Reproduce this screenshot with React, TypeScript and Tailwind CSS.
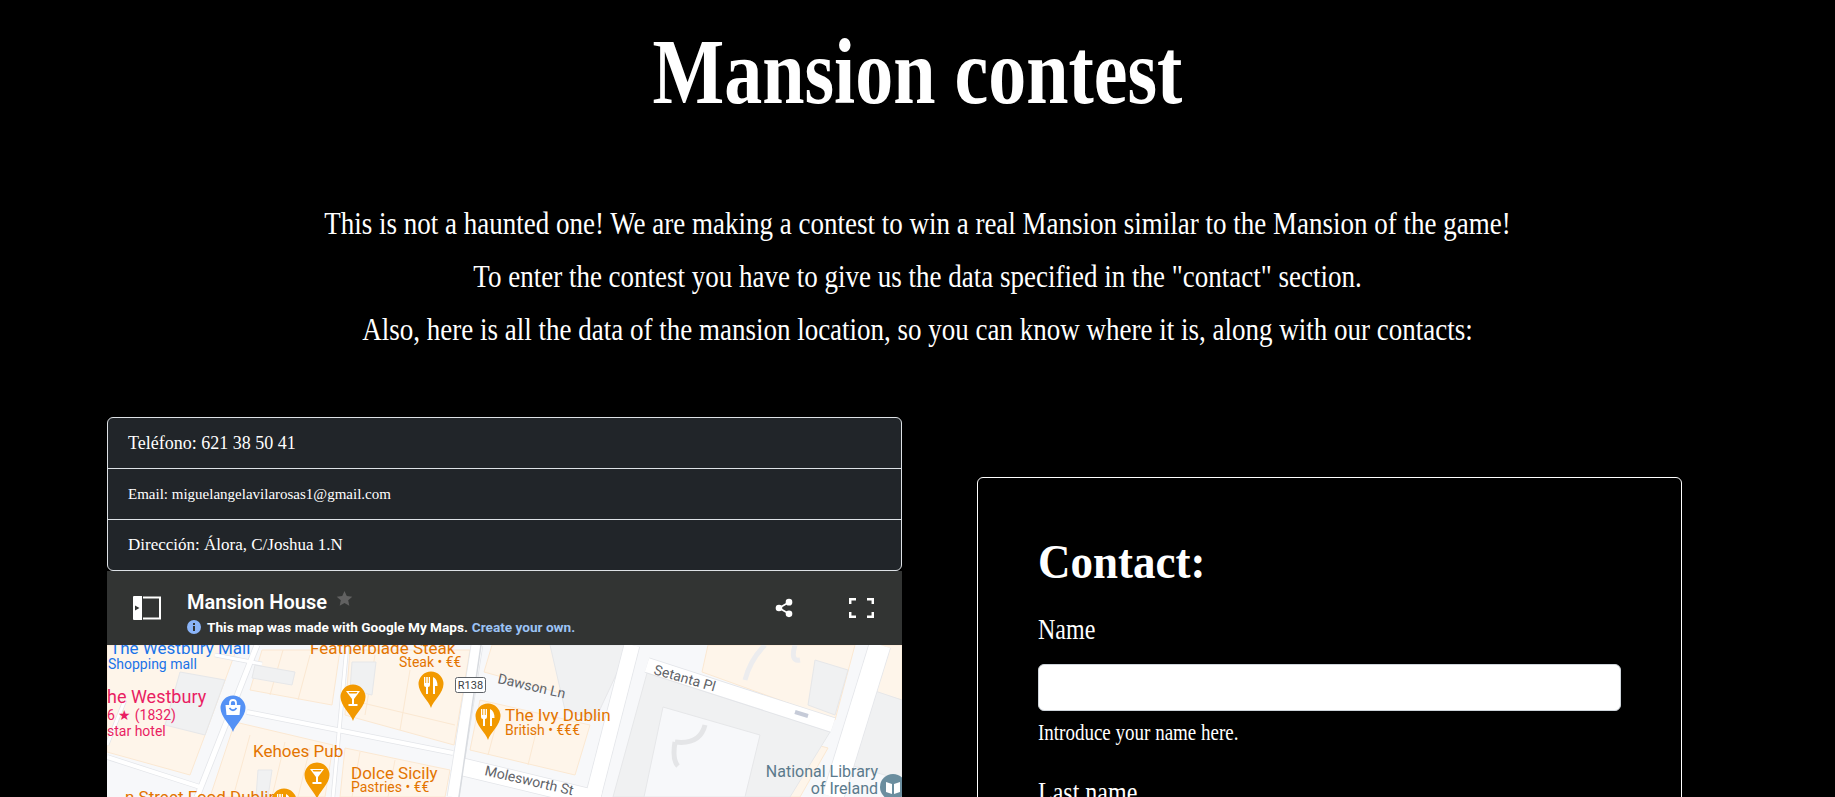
import { Share2 } from 'lucide-react';

const serif = 'font-["Liberation_Serif",serif]';

function MapPin({ x, y, color, kind }: { x: number; y: number; color: string; kind: 'fork' | 'glass' | 'bag' }) {
    return (
        <g transform={`translate(${x} ${y})`}>
            <path d="M0 24C-2 17-12.500 9-12.500 0A12.500 12.500 0 1 1 12.500 0C12.500 9 2 17 0 24Z" fill={color} />
            {kind === 'fork' && (
                <path d="M-7-7V1Q-7 3-5 3V10H-3V3Q-1 3-1 1V-7H-2.300V-1H-3.200V-7H-4.800V-1H-5.700V-7ZM2-7Q6.500-5 6.500 2H4V10H2Z" fill="#fff" />
            )}
            {kind === 'glass' && (
                <path d="M-7-6H7L1 2V7H4.500V9H-4.500V7H-1V2ZM-3.500-3.500H3.500L4.500-5H-4.500Z" fill="#fff" fillRule="evenodd" />
            )}
            {kind === 'bag' && (
                <g fill="none" stroke="#fff" strokeWidth="1.800">
                    <path d="M-7.500-3H7.500L6.500 7H-6.500Z" fill="#fff" stroke="none" />
                    <path d="M-3-3V-5Q-3-8 0-8T3-5V-3" />
                    <path d="M-3.500 0Q0 4.500 3.500 0" stroke={color} />
                </g>
            )}
        </g>
    );
}

const roads: [string, number][] = [
    ['M197 797L257 645', 5],
    ['M333 797L347 645', 3],
    ['M247 712L453 753', 4],
    ['M107 757L200 787', 4],
    ['M107 745L125 700', 3],
    ['M215 655L262 664', 3],
    ['M453 797L477 645', 11],
    ['M463 767L600 800', 17],
    ['M632 645L593 797', 15],
    ['M647 665L833 725', 14],
    ['M880 645L833 797', 21],
];

function MapCanvas() {
    const peach = '#fef5ea';
    const grey = '#f0f1f2';
    const edge = '#fbe8d2';
    return (
        <svg viewBox="107 645 795 152" className="block h-[152px] w-full" style={{ fontFamily: 'Roboto, sans-serif' }}>
            <rect x="107" y="645" width="795" height="152" fill="#f7f8fa" />
            {/* blocks */}
            <g fill={peach} stroke={edge} strokeWidth="1">
                <path d="M107 645H238L205 735L190 775L107 752Z" />
                <path d="M262 650L340 650L332 705L250 690Z" />
                <path d="M350 650H470L454 745L345 715Z" />
                <path d="M235 722L333 745L325 797H210Z" />
                <path d="M345 748L450 770L445 797H340Z" />
                <path d="M480 700L590 725L575 775L470 750Z" />
                <path d="M492 645H575L560 693L484 672Z" />
                <path d="M708 645H855L835 720L702 672Z" />
                <path d="M780 735L828 748L800 797H760Z" />
                <path d="M880 645H902V700L865 690Z" />
                <path d="M696 750L730 752L716 797H680Z" />
            </g>
            <g fill="none" stroke={edge} strokeWidth="1">
                <path d="M283 650L270 695M310 655L298 700M250 735L235 790M285 742L272 797M310 748L298 797" />
                <path d="M375 655L365 715M410 670L400 730M350 700L455 725" />
                <path d="M360 752L352 797M395 760L388 797M500 710L488 755M540 716L528 765" />
            </g>
            {/* grey buildings */}
            <g fill={grey} stroke="#e6e7e9" strokeWidth="1">
                <path d="M180 672L225 680L205 735L165 725Z" />
                <path d="M255 665L295 672L292 685L252 678Z" />
                <path d="M352 662H376L372 695L350 690Z" />
                <path d="M550 645H630L595 720L565 710Z" />
                <path d="M647 673L830 732L790 797H613Z" />
                <path d="M815 660L848 670L835 715L808 705Z" />
                <path d="M872 690L902 700V780L850 765Z" />
                <path d="M258 770H272L268 797H256Z" />
            </g>
            <path d="M663 707L760 735L745 797H644Z" fill="#f7f8fa" stroke="#e6e7e9" />
            <path d="M675 742Q700 745 705 725M675 742Q672 760 678 766" fill="none" stroke="#e4e5e7" strokeWidth="5" />
            <path d="M765 645Q750 660 745 680M795 645Q790 662 800 660" fill="none" stroke="#ececee" strokeWidth="5" />
            {/* roads */}
            <g fill="none">
                {roads.map(([d, width]) => (
                    <path key={d} d={d} stroke="#e3e5e9" strokeWidth={width + 1.5} />
                ))}
                {roads.map(([d, width]) => (
                    <path key={`${d}-fill`} d={d} stroke="#fff" strokeWidth={width} />
                ))}
            </g>
            <path d="M459 797L481 645" stroke="#d8dbe0" strokeWidth="1.500" fill="none" />
            <path d="M795 712L808 716" stroke="#c6cbd8" strokeWidth="4" />
            {/* labels */}
            <g fill="#1a73e8" fontSize="17">
                <text x="110" y="654">The Westbury Mall</text>
                <text x="108" y="669" fontSize="14">Shopping mall</text>
            </g>
            <g fill="#e91e63">
                <text x="107" y="703" fontSize="18">he Westbury</text>
                <text x="107" y="720" fontSize="14">6 ★ (1832)</text>
                <text x="107" y="736" fontSize="14">star hotel</text>
            </g>
            <g fill="#e37400" fontSize="17">
                <text x="310" y="654">Featherblade Steak</text>
                <text x="399" y="667" fontSize="14">Steak • €€</text>
                <text x="253" y="757">Kehoes Pub</text>
                <text x="351" y="779">Dolce Sicily</text>
                <text x="351" y="792" fontSize="14">Pastries • €€</text>
                <text x="125" y="803">n Street Food Dublin</text>
                <text x="505" y="721">The Ivy Dublin</text>
                <text x="505" y="735" fontSize="14">British • €€€</text>
            </g>
            <g fill="#5f6368" fontSize="14">
                <text transform="translate(497 683) rotate(13)">Dawson Ln</text>
                <text transform="translate(653 674) rotate(16)">Setanta Pl</text>
                <text transform="translate(484 775) rotate(13)">Molesworth St</text>
            </g>
            <g fill="#5b7a8c" fontSize="16" textAnchor="end">
                <text x="878" y="777">National Library</text>
                <text x="878" y="794">of Ireland</text>
            </g>
            <rect x="455.500" y="677.500" width="30" height="15" rx="2" fill="#fff" stroke="#5f6368" />
            <text x="470.500" y="689" fontSize="11" textAnchor="middle" fill="#3c4043">R138</text>
            <MapPin x={353} y={697} color="#f29900" kind="glass" />
            <MapPin x={431} y={684} color="#f29900" kind="fork" />
            <MapPin x={488} y={716} color="#f29900" kind="fork" />
            <MapPin x={233} y={708} color="#5491f5" kind="bag" />
            <MapPin x={317} y={775} color="#f29900" kind="glass" />
            <MapPin x={284} y={801} color="#f29900" kind="fork" />
            <circle cx="893" cy="787" r="13" fill="#6b8e9f" />
            <path d="M886 782L892 784V794L886 792ZM894 784L900 782V792L894 794Z" fill="#fff" />
        </svg>
    );
}

function MapHeader() {
    return (
        <div className="flex h-[74px] items-center bg-[#323433] font-['Roboto',sans-serif] text-white">
            <svg viewBox="0 0 28 24" className="ml-[26px] h-[24px] w-[28px]">
                <path d="M10 1.500H27V22.500H10" fill="none" stroke="#fff" strokeWidth="2" />
                <path d="M1 0H9V24H1A1 1 0 0 1 0 23V1A1 1 0 0 1 1 0Z" fill="#fff" />
                <path d="M2 9.500V14.500L6.500 12Z" fill="#323433" />
            </svg>
            <div className="mt-[8px] ml-[26px] flex flex-col">
                <div className="flex items-start">
                    <span className="text-[20px] leading-[26px] font-semibold">Mansion House</span>
                    <svg viewBox="0 0 24 24" className="mt-[1px] ml-[9px] h-[17px] w-[17px]" fill="#616161">
                        <path d="M12 1.500L15.200 8.600L23 9.400L17.200 14.600L18.800 22.300L12 18.400L5.200 22.300L6.800 14.600L1 9.400L8.800 8.600Z" />
                    </svg>
                </div>
                <div className="mt-[3px] flex items-center text-[13.600px] leading-[18px] font-bold">
                    <svg viewBox="0 0 14 14" className="mr-[6px] h-[14px] w-[14px]">
                        <circle cx="7" cy="7" r="7" fill="#8ab4f8" />
                        <rect x="6" y="6" width="2" height="5" fill="#323433" />
                        <rect x="6" y="3" width="2" height="2" fill="#323433" />
                    </svg>
                    <span>This map was made with Google My Maps.</span>
                    <span className="ml-[4px] text-[#9cc3f5]">Create your own.</span>
                </div>
            </div>
            <Share2 className="ml-auto h-[20px] w-[20px]" fill="#fff" strokeWidth={2} />
            <svg viewBox="0 0 25 20" className="mr-[28px] ml-[55px] h-[20px] w-[25px]" fill="none" stroke="#fff" strokeWidth="2.500">
                <path d="M1.200 6V1.200H7M18 1.200H23.800V6M23.800 14V18.800H18M7 18.800H1.200V14" />
            </svg>
        </div>
    );
}

function ContactList() {
    const rowClass = 'flex items-center px-[20px] text-white';
    return (
        <ul className={`rounded-[6px] border border-[#dee2e6] bg-[#212529] ${serif}`}>
            <li className={`${rowClass} h-[51px] border-b border-[#dee2e6] text-[18px]`}>Teléfono: 621 38 50 41</li>
            <li className={`${rowClass} h-[51px] border-b border-[#dee2e6] text-[15px]`}>Email: miguelangelavilarosas1@gmail.com</li>
            <li className={`${rowClass} h-[50px] text-[17px]`}>Dirección: Álora, C/Joshua 1.N</li>
        </ul>
    );
}

function ContactForm() {
    return (
        <form className={`mt-[60px] h-[400px] w-[705px] rounded-[6px] border border-white px-[60px] pt-[58px] text-white ${serif}`}>
            <h2 className="origin-left scale-y-[1.1] text-[45px] leading-[53px] font-bold">Contact:</h2>
            <label className="mt-[22px] block origin-left scale-y-[1.2] text-[24px] leading-[36px]">Name</label>
            <input className="mt-[17px] block h-[47px] w-full rounded-[6px] border border-[#ced4da] bg-white" />
            <p className="mt-[8px] origin-left scale-y-[1.2] text-[19px] leading-[28px]">Introduce your name here.</p>
            <label className="mt-[27px] block origin-left scale-y-[1.2] text-[24px] leading-[36px]">Last name</label>
        </form>
    );
}

export default function App() {
    return (
        <div className="h-screen overflow-hidden bg-black text-white">
            <h1 className={`scale-y-[1.22] pt-[24px] text-center text-[76px] leading-[90px] font-bold ${serif}`}>Mansion contest</h1>
            <div className={`mt-[83px] text-center text-[27px] leading-[53px] ${serif}`}>
                <p className="scale-y-[1.2]">This is not a haunted one! We are making a contest to win a real Mansion similar to the Mansion of the game!</p>
                <p className="scale-y-[1.2]">To enter the contest you have to give us the data specified in the "contact" section.</p>
                <p className="scale-y-[1.2]">Also, here is all the data of the mansion location, so you can know where it is, along with our contacts:</p>
            </div>
            <div className="mt-[61px] flex items-start gap-[75px] pl-[107px]">
                <div className="w-[795px]">
                    <ContactList />
                    <MapHeader />
                    <MapCanvas />
                </div>
                <ContactForm />
            </div>
        </div>
    );
}
